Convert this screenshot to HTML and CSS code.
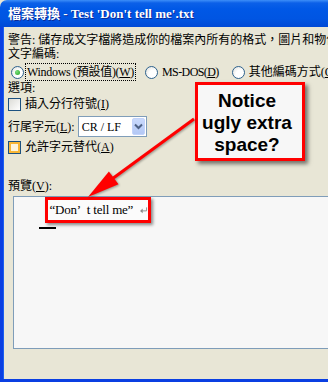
FILE: index.html
```html
<!DOCTYPE html>
<html lang="zh-Hant">
<head>
    <meta charset="UTF-8">
    <title>檔案轉換</title>
    <link rel="stylesheet" href="styles.css">
</head>
<body>

    <div class="window">
        <div class="titlebar">檔案轉換 - Test 'Don't tell me'.txt</div>
        <div class="content">
            <p class="line warn">警告: 儲存成文字檔將造成你的檔案內所有的格式，圖片和物件遺失。</p>
            <p class="line">文字編碼:</p>
            <div class="radios">
                <span class="radio checked"></span>
                <span class="focus">Windows (預設值)(<u>W</u>)</span>
                <span class="radio second"></span>
                <span class="narrow">MS-DOS(<u>D</u>)</span>
                <span class="radio third"></span>
                <span>其他編碼方式(<u>O</u>):</span>
            </div>
            <p class="line options">選項:</p>
            <div class="check-row">
                <span class="checkbox"></span>
                <span>插入分行符號(<u>I</u>)</span>
            </div>
            <div class="eol-row">
                <span>行尾字元(<u>L</u>):</span>
                <div class="select">
                    <span>CR / LF</span>
                    <span class="drop">
                        <svg width="9" height="7" viewBox="0 0 9 7"><path d="M1 1.5 L4.5 5 L8 1.5" fill="none" stroke="#4d6185" stroke-width="2"/></svg>
                    </span>
                </div>
            </div>
            <div class="check-row hot-row">
                <span class="checkbox hot"></span>
                <span>允許字元替代(<u>A</u>)</span>
            </div>
            <p class="line preview-label">預覽(<u>V</u>):</p>
            <div class="preview">
                <span class="highlight"><span class="lq">“</span>Don<span class="rq">’</span> t tell me” <svg class="ret" width="10" height="9" viewBox="0 0 10 9"><path d="M8.5 0.5 V5 H2.5" fill="none" stroke="#8a8a8a" stroke-width="1.2"/><path d="M0 5 L3.5 2 V8 Z" fill="#8a8a8a"/></svg></span>
                <div class="caret"></div>
            </div>
        </div>

        <div class="callout">Notice<br>ugly extra<br>space?</div>
        <svg class="arrow" width="328" height="382" viewBox="0 0 328 382">
            <line x1="194" y1="119" x2="112" y2="179" stroke="#ff0000" stroke-width="3"/>
            <polygon points="88,197 118.5,184.3 108.9,171.5" fill="#ff0000"/>
        </svg>
    </div>

</body>
</html>
```

FILE: styles.css
```css
body {
    margin: 0;
    background-color: #e8e6d6;
}
.window {
    position: relative;
    width: 328px;
    height: 382px;
    display: flex;
    flex-direction: column;
    overflow: hidden;
    font-family: "Liberation Serif", "Noto Sans CJK TC", serif;
    font-size: 12px;
    line-height: 14px;
    color: #000;
}
.titlebar {
    flex-shrink: 0;
    height: 27px;
    line-height: 28px;
    padding-left: 8px;
    border-top-left-radius: 7px;
    background: linear-gradient(#3d8ef8 0, #0b60e8 3px, #0058e6 9px, #0055e2 19px, #0049d6 27px);
    color: white;
    font-size: 13px;
    font-weight: bold;
    white-space: nowrap;
    text-shadow: 1px 1px #0c2a96;
}
.content {
    flex: 1;
    border-left: 3px solid #0a3fe2;
    border-bottom: 3px solid #0a3fe2;
    box-shadow: inset 1px 0 #1b5ff0;
    background-color: #e8e6d6;
    padding: 6px 0 0 5px;
}
.line {
    margin: 0;
    white-space: nowrap;
}
.radios {
    display: flex;
    align-items: center;
    height: 16px;
    margin-top: 3px;
    white-space: nowrap;
}
.radios span {
    flex-shrink: 0;
}
.radio {
    width: 11px;
    height: 11px;
    border: 1px solid #2d628e;
    border-radius: 50%;
    background: radial-gradient(circle at 65% 65%, #ffffff 40%, #dcdcd6 100%);
    margin-left: 3px;
    margin-right: 3px;
    position: relative;
}
.radio.checked::after {
    content: "";
    position: absolute;
    left: 3px;
    top: 3px;
    width: 5px;
    height: 5px;
    border-radius: 50%;
    background: radial-gradient(circle at 35% 35%, #7ee07e, #21a121);
}
.radio.second {
    margin-left: 11px;
    margin-right: 4px;
}
.radio.third {
    margin-left: 13px;
    margin-right: 4px;
}
.focus {
    outline: 1px dotted #000;
    outline-offset: 1px;
    letter-spacing: -0.3px;
}
.narrow {
    letter-spacing: -0.6px;
}
.options {
    margin-top: 1px;
}
.check-row {
    display: flex;
    align-items: center;
    height: 14px;
    margin-top: 2px;
    white-space: nowrap;
}
.checkbox {
    flex-shrink: 0;
    width: 11px;
    height: 11px;
    border: 1px solid #1c5180;
    background: linear-gradient(135deg, #dcdcd7, #ffffff);
    margin-right: 4px;
}
.checkbox.hot {
    box-shadow: inset 0 0 0 2px #f8b636;
    background: #fdf4dc;
}
.eol-row {
    display: flex;
    align-items: center;
    height: 21px;
    margin-top: 5px;
    white-space: nowrap;
}
.select {
    flex-shrink: 0;
    width: 69px;
    height: 21px;
    margin-left: 3px;
    border: 1px solid #7f9db9;
    background-color: white;
    display: flex;
    align-items: center;
    justify-content: space-between;
    padding-left: 3px;
    box-sizing: border-box;
}
.drop {
    width: 13px;
    height: 17px;
    margin-right: 1px;
    border-radius: 2px;
    background: linear-gradient(#c9d9fc, #b3c8f5);
    border: 1px solid #c2d3fb;
    box-sizing: border-box;
    display: flex;
    align-items: center;
    justify-content: center;
}
.hot-row {
    margin-top: 3px;
}
.preview-label {
    margin-top: 25px;
}
.preview {
    margin-top: 3px;
    margin-left: 5px;
    width: 330px;
    height: 151px;
    border: 1px solid #7f9db9;
    background-color: #f7f7f7;
}
.highlight {
    display: inline-flex;
    align-items: center;
    margin-left: 31px;
    width: 106px;
    height: 26px;
    box-sizing: border-box;
    border: 3px solid #f00;
    background-color: #fbfbfb;
    box-shadow: 2px 2px 3px rgba(0, 0, 0, 0.45);
    font-size: 13px;
    letter-spacing: -0.2px;
    white-space: pre;
}
.lq {
    display: inline-block;
    width: 9px;
    text-align: right;
}
.rq {
    display: inline-block;
    width: 9px;
    text-align: left;
}
.ret {
    margin-left: 4px;
}
.caret {
    width: 17px;
    height: 2px;
    margin-left: 25px;
    margin-top: 4px;
    background-color: #000;
}
.callout {
    position: absolute;
    left: 195px;
    top: 82px;
    width: 110px;
    height: 79px;
    box-sizing: border-box;
    border: 3px solid #f00;
    background-color: #f7f7f7;
    box-shadow: 3px 3px 4px rgba(0, 0, 0, 0.5);
    padding: 5px 6px 0 0;
    font-family: "Liberation Sans", Arial, sans-serif;
    font-size: 19px;
    line-height: 22px;
    font-weight: bold;
    text-align: center;
}
.arrow {
    position: absolute;
    left: 0;
    top: 0;
    filter: drop-shadow(1px 1px 1px rgba(0, 0, 0, 0.35));
}
```
